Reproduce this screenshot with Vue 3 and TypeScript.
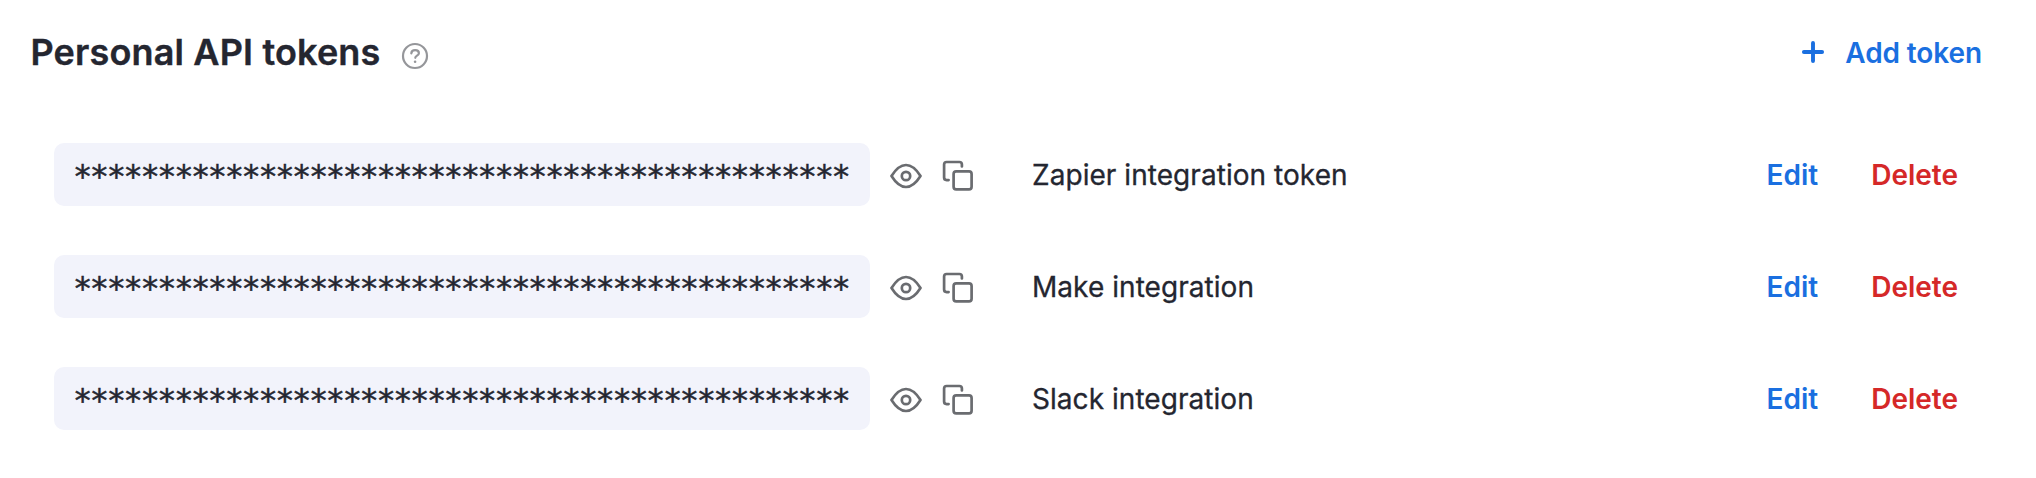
<script setup lang="ts">
interface ApiToken {
  id: number
  name: string
  length: number
}

const tokens: ApiToken[] = [
  { id: 1, name: 'Zapier integration token', length: 46 },
  { id: 2, name: 'Make integration', length: 46 },
  { id: 3, name: 'Slack integration', length: 46 },
]

const mask = (token: ApiToken): string => '*'.repeat(token.length)
</script>

<template>
  <section class="panel">
    <header class="header">
      <h2 class="title">Personal API tokens</h2>
      <svg class="help" viewBox="0 0 28 28" fill="none" stroke="currentColor" stroke-width="2.2" stroke-linecap="round">
        <circle cx="14" cy="14" r="12" />
        <path d="M10.3 11.3c.2-2 1.7-3.2 3.8-3.2 2.2 0 3.8 1.3 3.8 3.1 0 2.4-3.6 2.5-3.6 4.6" />
        <circle cx="14.1" cy="19.8" r="1.3" fill="currentColor" stroke="none" />
      </svg>
      <button class="add" type="button">
        <svg class="plus" viewBox="0 0 24 24" fill="none" stroke="currentColor" stroke-width="3.9" stroke-linecap="round">
          <path d="M12 2.9v18.2M2.9 12h18.2" />
        </svg>
        <span class="label">Add token</span>
      </button>
    </header>

    <ul class="list">
      <li v-for="token in tokens" :key="token.id" class="row">
        <code class="secret">{{ mask(token) }}</code>
        <button class="icon" type="button" aria-label="Show">
          <svg viewBox="0 0 32 32" fill="none" stroke="currentColor" stroke-width="2.7" stroke-linejoin="round">
            <path d="M1.5 16C6 8.800 10.500 5 16 5s10 3.800 14.500 11C26 23.200 21.500 27 16 27S6 23.200 1.500 16Z" />
            <circle cx="16" cy="16" r="4.2" />
          </svg>
        </button>
        <button class="icon" type="button" aria-label="Copy">
          <svg viewBox="0 0 32 32" fill="none" stroke="currentColor" stroke-width="2.7" stroke-linecap="round">
            <rect x="11.6" y="11.4" width="18" height="18" rx="2.6" />
            <path d="M6.6 20.1H4.6a2.5 2.5 0 0 1-2.5-2.5V4.5a2.5 2.5 0 0 1 2.5-2.5h12.8a2.5 2.5 0 0 1 2.5 2.5v2" />
          </svg>
        </button>
        <span class="name">{{ token.name }}</span>
        <button class="action edit" type="button">Edit</button>
        <button class="action delete" type="button">Delete</button>
      </li>
    </ul>
  </section>
</template>

<style scoped>
.panel {
  box-sizing: border-box;
  width: 100%;
  height: 478px;
  padding: 20px 54px 0 30px;
  background: #fff;
  color: #242630;
  font-family: Inter, "Liberation Sans", sans-serif;
  font-size: 28px;
}
button {
  margin: 0;
  padding: 0;
  border: 0;
  background: none;
  font: inherit;
  color: inherit;
  cursor: pointer;
}
svg {
  display: block;
}
.header {
  display: flex;
  align-items: center;
  height: 64px;
}
.title {
  box-sizing: border-box;
  width: 350px;
  margin: 0;
  padding-left: 0.5px;
  font-size: 36px;
  font-weight: 600;
  line-height: 64px;
  letter-spacing: 0.16px;
  white-space: nowrap;
  -webkit-text-stroke: 0.4px currentColor;
}
.help {
  width: 28px;
  height: 28px;
  margin: 8px 0 0 21px;
  color: #95969a;
}
.add {
  display: flex;
  align-items: center;
  gap: 20px;
  height: 64px;
  margin-left: auto;
  color: #1a6fe0;
  font-weight: 600;
  letter-spacing: -0.1px;
}
.plus {
  width: 24px;
  height: 24px;
}
.label {
  padding-top: 2px;
}
.list {
  margin: 58px 0 0;
  padding: 0 24px;
  list-style: none;
}
.row {
  display: flex;
  align-items: center;
  height: 65px;
  margin-bottom: 47px;
}
.secret {
  box-sizing: border-box;
  width: 816px;
  height: 63px;
  padding-left: 19px;
  border-radius: 10px;
  background: #f2f3fb;
  font-family: "DejaVu Sans Mono", monospace;
  font-size: 32px;
  line-height: 67px;
  letter-spacing: -2.41px;
  white-space: nowrap;
  -webkit-text-stroke: 0.5px currentColor;
}
.icon {
  width: 32px;
  height: 32px;
  margin: 3px 0 0 20px;
  color: #6a6c70;
}
.name {
  flex: 1;
  margin-left: 58px;
  padding-top: 1px;
  letter-spacing: 0.05px;
  -webkit-text-stroke: 0.3px currentColor;
}
.action {
  padding-top: 1px;
  font-weight: 600;
}
.edit {
  color: #1a6fe0;
}
.delete {
  margin-left: 53px;
  color: #d52828;
}
</style>
